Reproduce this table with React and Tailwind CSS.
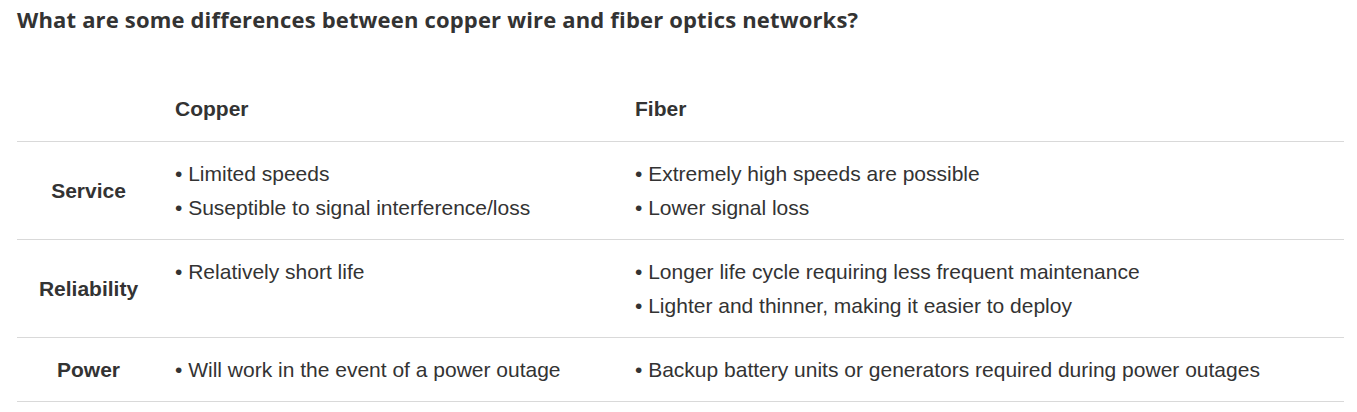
import React from 'react';

const rows = [
    {
        label: 'Service',
        copper: ['Limited speeds', 'Suseptible to signal interference/loss'],
        fiber: ['Extremely high speeds are possible', 'Lower signal loss'],
    },
    {
        label: 'Reliability',
        copper: ['Relatively short life'],
        fiber: ['Longer life cycle requiring less frequent maintenance', 'Lighter and thinner, making it easier to deploy'],
    },
    {
        label: 'Power',
        copper: ['Will work in the event of a power outage'],
        fiber: ['Backup battery units or generators required during power outages'],
    },
];

function Bullets({ items }) {
    return (
        <ul className="flex flex-col gap-[1px]">
            {items.map((item) => (
                <li key={item}>• {item}</li>
            ))}
        </ul>
    );
}

export default function App() {
    return (
        <div className="min-h-[412px] bg-white px-[17px] text-[#333333]">
            <h2 className="pt-[4px] text-[22px] leading-[30px] tracking-[0.17px] font-bold text-[#333333] font-['Open_Sans',sans-serif]">
                What are some differences between copper wire and fiber optics networks?
            </h2>
            <table className="mt-[44px] w-[1327px] border-collapse text-[21px] leading-[33px] font-['Liberation_Sans',Arial,sans-serif]">
                <thead>
                    <tr className="border-b border-[#d9d9d9]">
                        <th className="w-[143px] px-[15px] pt-[14px] pb-[16px]"></th>
                        <th className="w-[460px] px-[15px] pt-[14px] pb-[16px] text-left font-bold">Copper</th>
                        <th className="px-[15px] pt-[14px] pb-[16px] text-left font-bold">Fiber</th>
                    </tr>
                </thead>
                <tbody>
                    {rows.map((row) => (
                        <tr key={row.label} className="border-b border-[#d9d9d9]">
                            <td className="p-[15px] text-center align-middle font-bold">{row.label}</td>
                            <td className="p-[15px] align-top"><Bullets items={row.copper} /></td>
                            <td className="p-[15px] align-top"><Bullets items={row.fiber} /></td>
                        </tr>
                    ))}
                </tbody>
            </table>
        </div>
    );
}
